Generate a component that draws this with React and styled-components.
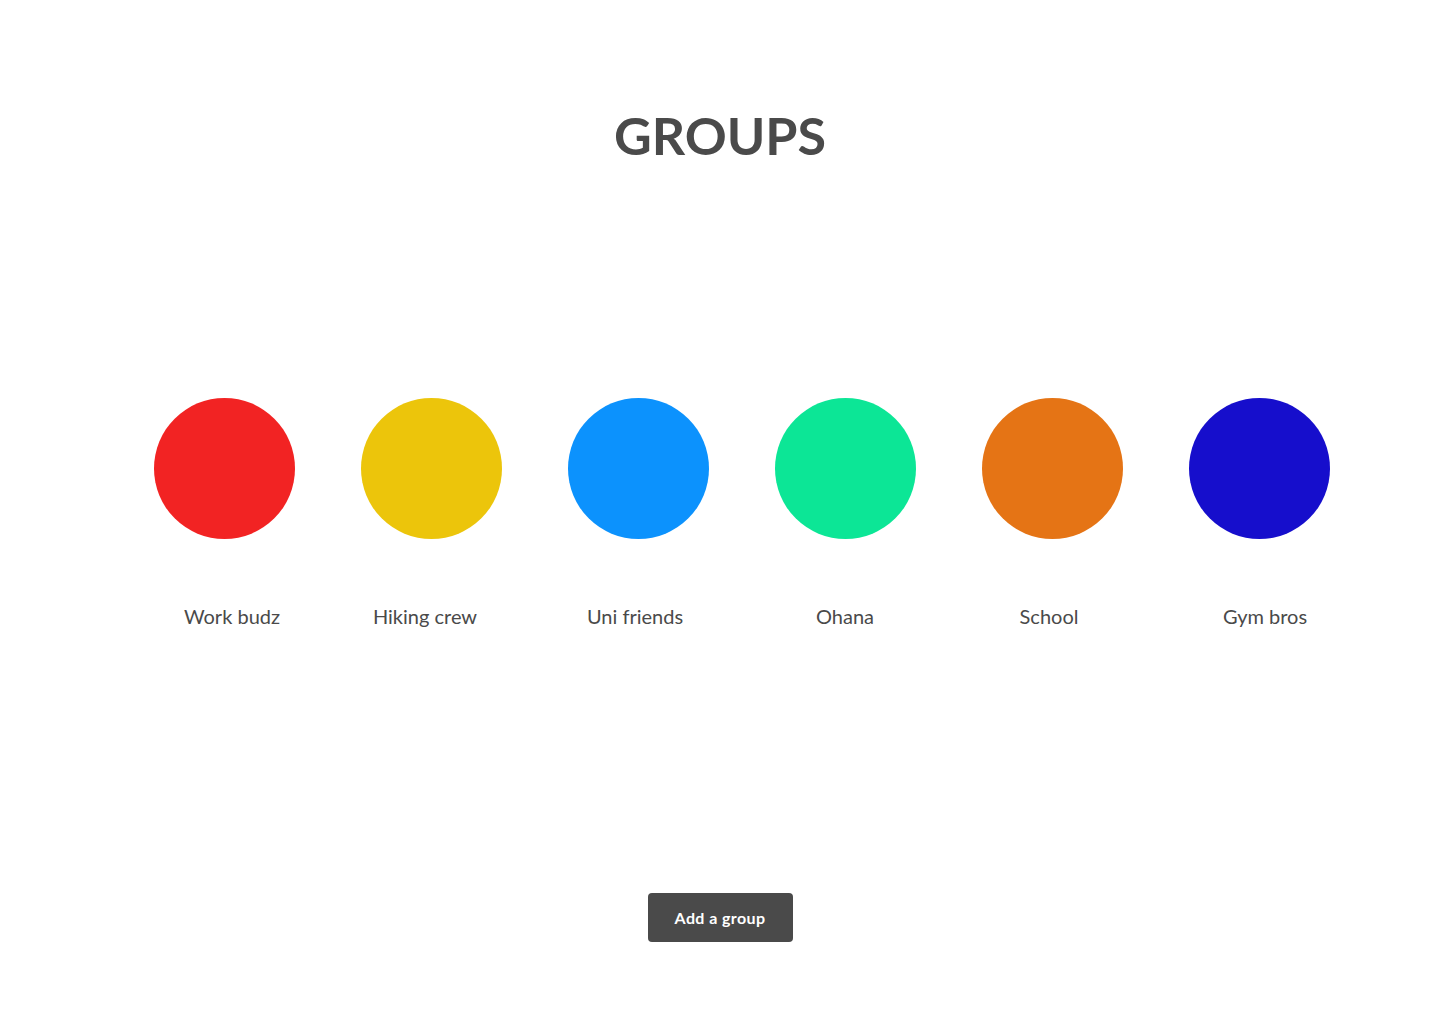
import styled, { createGlobalStyle } from "styled-components";

const groups = [
    {name: "Work budz", color: "#f22323", nudge: 8},
    {name: "Hiking crew", color: "#ecc50b", nudge: -6},
    {name: "Uni friends", color: "#0c92fd", nudge: -3},
    {name: "Ohana", color: "#0ce696", nudge: 0},
    {name: "School", color: "#e57415", nudge: -3},
    {name: "Gym bros", color: "#160ecc", nudge: 6},
];

const GlobalStyle = createGlobalStyle`
    body {
        margin: 0;
        background: #ffffff;
        font-family: Lato, "Open Sans", sans-serif;
        color: #4a4a4a;
    }
`;

function App() {
    return (
        <Page>
            <GlobalStyle/>
            <Title>GROUPS</Title>
            <GroupRow>
                {groups.map((group) => (
                    <GroupItem key={group.name}>
                        <Circle $color={group.color}/>
                        <Label $nudge={group.nudge}>{group.name}</Label>
                    </GroupItem>
                ))}
            </GroupRow>
            <AddButton>Add a group</AddButton>
        </Page>
    );
}

export default App;


const Page = styled.div`
    width: 1440px;
    height: 1024px;
    display: flex;
    flex-direction: column;
    align-items: center;
`;

const Title = styled.h1`
    font-size: 52px;
    font-weight: 700;
    line-height: 1;
    margin: 0;
    margin-top: 109px;
    color: #4a4a4a;
`;

const GroupRow = styled.div`
    display: flex;
    flex-direction: row;
    justify-content: center;
    margin-top: 237px;
    padding-left: 43px;
`;

const GroupItem = styled.div`
    width: 207px;
    display: flex;
    flex-direction: column;
    align-items: center;
`;

const Circle = styled.div`
    width: 141px;
    height: 141px;
    border-radius: 50%;
    background: ${(props) => props.$color};
`;

const Label = styled.p`
    font-size: 20px;
    font-weight: 400;
    line-height: 24px;
    margin: 65px 0 0;
    transform: translateX(${(props) => props.$nudge}px);
    color: #4a4a4a;
`;

const AddButton = styled.button`
    margin-top: 265px;
    width: 145px;
    height: 49px;
    border: none;
    border-radius: 4px;
    background: #4a4a4a;
    color: #ffffff;
    font-family: Lato, "Open Sans", sans-serif;
    font-size: 16px;
    font-weight: 700;
    letter-spacing: 0.4px;
    cursor: pointer;
`;
